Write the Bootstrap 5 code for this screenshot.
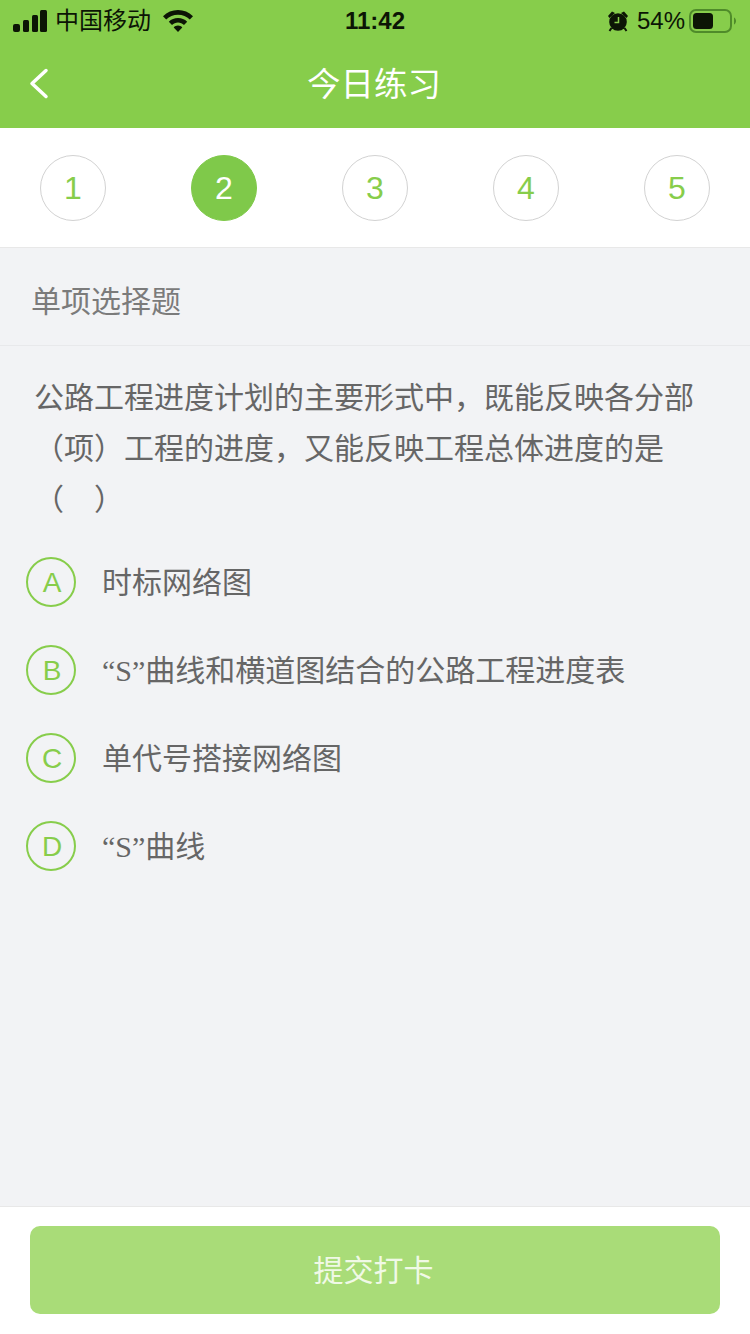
<!DOCTYPE html>
<html lang="zh">

<head>
  <meta charset="utf-8">
  <meta name="viewport" content="width=device-width">
  <title>今日练习</title>
  <link href="https://cdn.jsdelivr.net/npm/bootstrap@5.3.2/dist/css/bootstrap.min.css" rel="stylesheet" type="text/css" />
  <style>
    html, body { height: 100%; }
    body {
      font-family: "Liberation Sans", "Noto Sans CJK SC", sans-serif;
      background: #f2f3f5;
      color: #666;
      overflow: hidden;
    }
    .page-wrap { height: 1334px; }
    .top-green { background: #87cd4b; height: 128px; }
    .status-row { height: 42px; padding: 0 13px; color: #0c1505; font-size: 24px; }
    .status-side { width: 270px; }
    .status-time { font-weight: 700; font-size: 24px; }
    .title-row { height: 86px; color: #fff; font-size: 33.500px; padding-top: 1px; padding-right: 2px; }
    .back-btn { position: absolute; left: 29px; top: 68px; }
    .step-row { background: #fff; height: 120px; padding: 0 40px; border-bottom: 1px solid #e8e8e8; }
    .step-dot {
      width: 66px; height: 66px; border-radius: 50%;
      border: 1px solid #d2d2d2; color: #87cd4b; font-size: 32px;
    }
    .step-dot.active { background: #7fc94a; border-color: #7fc94a; color: #fff; }
    .type-row { height: 98px; padding: 10px 31px 0; font-size: 30px; color: #7b7b7b; border-bottom: 1px solid #e8e9eb; }
    .q-text { font-size: 30px; line-height: 51px; padding: 26px 34px 0; color: #666; margin: 0; }
    .paren-gap { display: inline-block; width: 30px; }
    .opt-list { padding: 32px 26px 0; gap: 38px; }
    .opt-row { height: 50px; font-size: 30px; color: #666; gap: 26px; }
    .opt-ball {
      width: 50px; height: 50px; border-radius: 50%; padding-left: 2px; padding-top: 2px;
      border: 2px solid #87cd4b; color: #87cd4b; font-size: 28px; flex: none;
    }
    .latin { font-family: "Liberation Serif", serif; }
    .foot-bar { background: #fff; height: 128px; padding: 19px 30px 0; border-top: 1px solid #e8e8e8; }
    .submit-btn {
      width: 100%; height: 88px; border: 0; border-radius: 10px; padding: 0 3px 0 0;
      background: #a9dc78; color: #f0f9e6; font-size: 30px;
    }
    .submit-btn:disabled { background: #a9dc78; color: #f0f9e6; opacity: 1; }
  </style>
</head>

<body>
  <div class="page-wrap d-flex flex-column">
    <header class="top-green position-relative">
      <div class="status-row d-flex align-items-center justify-content-between">
        <div class="status-side d-flex align-items-center gap-2">
          <svg width="34" height="22" viewBox="0 0 34 22" fill="#0c1505">
            <rect x="0" y="14" width="7" height="8" rx="2" />
            <rect x="10" y="10" width="6" height="12" rx="1.500" />
            <rect x="19" y="5" width="6" height="17" rx="1.500" />
            <rect x="27" y="0" width="7" height="22" rx="1.500" />
          </svg>
          <span>中国移动</span>
          <svg class="ms-1" width="30" height="22" viewBox="0 0 30 22" fill="#0c1505">
            <path d="M15 0C9.200 0 4.200 2.200 0 6.200l3.200 3.300C6.300 6.500 10.400 4.800 15 4.800s8.700 1.700 11.800 4.700L30 6.200C25.800 2.200 20.800 0 15 0z" />
            <path d="M15 8c-3.500 0-6.700 1.300-9.200 3.700l3.200 3.300c1.600-1.500 3.700-2.400 6-2.400s4.400.9 6 2.400l3.200-3.300C21.700 9.300 18.500 8 15 8z" />
            <path d="M15 15.600c-1.700 0-3.200.7-4.300 1.800L15 22l4.300-4.600c-1.100-1.100-2.600-1.800-4.300-1.800z" />
          </svg>
        </div>
        <span class="status-time">11:42</span>
        <div class="status-side d-flex align-items-center justify-content-end">
          <svg class="me-2" width="22" height="22" viewBox="0 0 22 22" fill="#0c1505">
            <circle cx="11" cy="12" r="8.800" />
            <path d="M1 6 5 1.500 8 3 2.500 8zM21 6 17 1.500 14 3 19.500 8z" />
            <path d="M4.500 18 2.500 21M17.500 18l2 3" stroke="#0c1505" stroke-width="2" />
            <path d="M11.500 7v5.500H7.500" fill="none" stroke="#87cd4b" stroke-width="1.500" />
          </svg>
          <span>54%</span>
          <svg class="ms-1" width="48" height="24" viewBox="0 0 48 24">
            <rect x="1" y="1" width="41" height="22" rx="6" fill="none" stroke="#4f8b2a" stroke-width="2" />
            <rect x="4" y="4" width="20" height="16" rx="3.500" fill="#0c1505" />
            <path d="M45 8.500c1.300.6 2 2 2 3.500s-.7 2.900-2 3.500z" fill="#4f8b2a" />
          </svg>
        </div>
      </div>
      <div class="title-row d-flex align-items-center justify-content-center">今日练习</div>
      <svg class="back-btn" width="20" height="32" viewBox="0 0 20 32" fill="none" stroke="#fff" stroke-width="3.500" stroke-linecap="round" stroke-linejoin="round">
        <path d="M17 2.500 3 15.500l14 13" />
      </svg>
    </header>

    <div class="step-row d-flex align-items-center justify-content-between">
      <div class="step-dot d-flex align-items-center justify-content-center">1</div>
      <div class="step-dot active d-flex align-items-center justify-content-center">2</div>
      <div class="step-dot d-flex align-items-center justify-content-center">3</div>
      <div class="step-dot d-flex align-items-center justify-content-center">4</div>
      <div class="step-dot d-flex align-items-center justify-content-center">5</div>
    </div>

    <main class="flex-grow-1">
      <div class="type-row d-flex align-items-center">单项选择题</div>
      <p class="q-text">公路工程进度计划的主要形式中，既能反映各分部（项）工程的进度，又能反映工程总体进度的是<span class="text-nowrap">（<span class="paren-gap"></span>）</span></p>
      <div class="opt-list d-flex flex-column">
        <div class="opt-row d-flex align-items-center">
          <div class="opt-ball d-flex align-items-center justify-content-center">A</div><span>时标网络图</span>
        </div>
        <div class="opt-row d-flex align-items-center">
          <div class="opt-ball d-flex align-items-center justify-content-center">B</div><span><span class="latin">“S”</span>曲线和横道图结合的公路工程进度表</span>
        </div>
        <div class="opt-row d-flex align-items-center">
          <div class="opt-ball d-flex align-items-center justify-content-center">C</div><span>单代号搭接网络图</span>
        </div>
        <div class="opt-row d-flex align-items-center">
          <div class="opt-ball d-flex align-items-center justify-content-center">D</div><span><span class="latin">“S”</span>曲线</span>
        </div>
      </div>
    </main>

    <div class="foot-bar">
      <button class="btn submit-btn" type="button" disabled>提交打卡</button>
    </div>
  </div>
  <script src="https://cdn.jsdelivr.net/npm/bootstrap@5.3.2/dist/js/bootstrap.bundle.min.js"></script>
</body>

</html>
